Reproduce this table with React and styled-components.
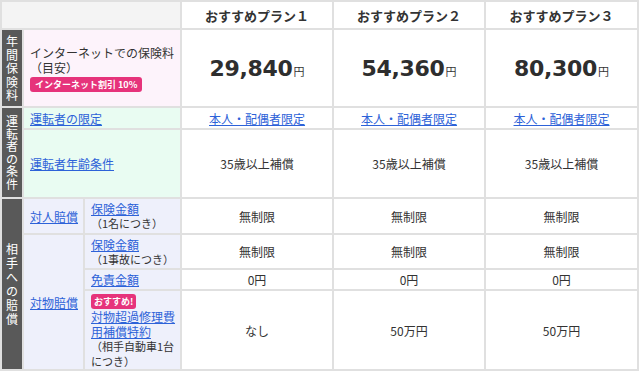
import React from 'react';
import styled, { createGlobalStyle } from 'styled-components';

const GlobalStyle = createGlobalStyle`
  body {
    margin: 0;
    background: #ffffff;
    font-family: "Noto Sans CJK JP", "Noto Sans", sans-serif;
    color: #333333;
  }
`

const Table = styled.table`
  border-collapse: collapse;
  table-layout: fixed;
  width: 639px;
  font-size: 12px;
  border: 2px solid #e0e0e0;
`

const Cell = styled.td`
  border: 2px solid #e0e0e0;
  padding: 0 2px 0 6px;
  vertical-align: middle;
  line-height: 15px;
  height: ${p => p.h || 'auto'};
  background: ${p => p.bg || '#ffffff'};
`

const Corner = styled.th`
  border: 2px solid #e0e0e0;
  background: #f4f4f4;
  height: 26px;
  padding: 0;
`

const PlanHead = styled.th`
  border: 2px solid #e0e0e0;
  background: #ffffff;
  font-size: 13px;
  font-weight: 700;
  color: #333333;
  padding: 0;
`

const Side = styled.td`
  border: 2px solid #e0e0e0;
  background: #595959;
  padding: 0;
  vertical-align: middle;
`

const SideText = styled.span`
  display: block;
  width: 12px;
  margin: 0 auto;
  color: #ffffff;
  font-size: 12px;
  line-height: ${p => p.lh || 13}px;
  word-break: break-all;
  text-align: center;
`

const Value = styled.td`
  border: 2px solid #e0e0e0;
  text-align: center;
  vertical-align: middle;
  padding: 0;
  background: #ffffff;
  color: #333333;
`

const Price = styled.span`
  font-family: "DejaVu Sans", sans-serif;
  font-weight: 700;
  font-size: 22px;
  color: #2e2e2e;
  letter-spacing: -0.3px;
`

const Yen = styled.span`
  font-size: 11px;
  font-weight: 400;
  margin-left: 1px;
`

const Link = styled.a`
  color: #2d62d8;
  text-decoration: underline;
  cursor: pointer;
`

const Note = styled.div`
  font-size: 11px;
  color: #333333;
`

const Badge = styled.span`
  display: inline-block;
  background: #e6337b;
  color: #ffffff;
  font-size: 9px;
  font-weight: 700;
  line-height: 15px;
  padding: 0 ${p => p.px || 5}px;
  border-radius: 3px;
  margin: ${p => p.m || '0'};
`

const plans = ['おすすめプラン１', 'おすすめプラン２', 'おすすめプラン３']
const prices = ['29,840', '54,360', '80,300']

const Row = ({ values }) => values.map((v, i) => (
  <Value key={i}>{v}</Value>
))

export default function App() {
  return (
    <>
      <GlobalStyle />
      <Table>
        <colgroup>
          <col style={{ width: 22 }} />
          <col style={{ width: 61 }} />
          <col style={{ width: 97 }} />
          <col style={{ width: 152 }} />
          <col style={{ width: 152 }} />
          <col style={{ width: 153 }} />
        </colgroup>
        <thead>
          <tr>
            <Corner colSpan={3} />
            {plans.map(p => <PlanHead key={p}>{p}</PlanHead>)}
          </tr>
        </thead>
        <tbody>
          <tr>
            <Side><SideText lh={13.5}>年間保険料</SideText></Side>
            <Cell colSpan={2} bg="#fdf3fb" h="76px">
              <div>インターネットでの保険料</div>
              <div>（目安）</div>
              <Badge m="2px 0 0">インターネット割引 10%</Badge>
            </Cell>
            {prices.map(p => (
              <Value key={p}><Price>{p}</Price><Yen>円</Yen></Value>
            ))}
          </tr>
          <tr>
            <Side rowSpan={2}><SideText lh={12.5}>運転者の条件</SideText></Side>
            <Cell colSpan={2} bg="#e9fcf2" h="20px"><Link>運転者の限定</Link></Cell>
            {[0, 1, 2].map(i => <Value key={i}><Link>本人・配偶者限定</Link></Value>)}
          </tr>
          <tr>
            <Cell colSpan={2} bg="#e9fcf2" h="67px"><Link>運転者年齢条件</Link></Cell>
            <Row values={['35歳以上補償', '35歳以上補償', '35歳以上補償']} />
          </tr>
          <tr>
            <Side rowSpan={4}><SideText lh={14}>相手への賠償</SideText></Side>
            <Cell bg="#eef0fb" h="34px"><Link>対人賠償</Link></Cell>
            <Cell bg="#eef0fb">
              <Link>保険金額</Link>
              <Note>（1名につき）</Note>
            </Cell>
            <Row values={['無制限', '無制限', '無制限']} />
          </tr>
          <tr>
            <Cell rowSpan={3} bg="#eef0fb"><Link>対物賠償</Link></Cell>
            <Cell bg="#eef0fb" h="33px">
              <Link>保険金額</Link>
              <Note>（1事故につき）</Note>
            </Cell>
            <Row values={['無制限', '無制限', '無制限']} />
          </tr>
          <tr>
            <Cell bg="#eef0fb" h="19px"><Link>免責金額</Link></Cell>
            <Row values={['0円', '0円', '0円']} />
          </tr>
          <tr>
            <Cell bg="#eef0fb" h="77px">
              <Badge m="3px 0 0" px={3}>おすすめ!</Badge>
              <div><Link>対物超過修理費用補償特約</Link></div>
              <Note>（相手自動車1台につき）</Note>
            </Cell>
            <Row values={['なし', '50万円', '50万円']} />
          </tr>
        </tbody>
      </Table>
    </>
  )
}
